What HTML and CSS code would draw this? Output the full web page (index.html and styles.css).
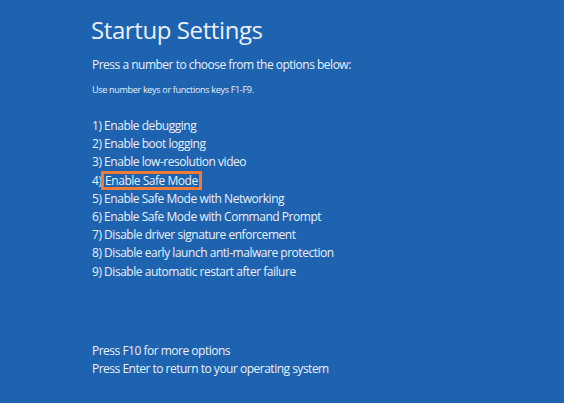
FILE: index.html
```html
<!DOCTYPE html>
<html>
<head>
<meta charset="utf-8">
<link rel="stylesheet" href="styles.css">
</head>
<body>
<main class="screen">
  <h1 class="title">Startup Settings</h1>
  <p class="lead">Press a number to choose from the options below:</p>
  <p class="hint">Use number keys or functions keys F1-F9.</p>
  <ol class="options">
    <li>1) Enable debugging</li>
    <li>2) Enable boot logging</li>
    <li>3) Enable low-resolution video</li>
    <li>4) <span class="highlight">Enable Safe Mode</span></li>
    <li>5) Enable Safe Mode with Networking</li>
    <li>6) Enable Safe Mode with Command Prompt</li>
    <li>7) Disable driver signature enforcement</li>
    <li>8) Disable early launch anti-malware protection</li>
    <li>9) Disable automatic restart after failure</li>
  </ol>
  <div class="footer">
    <p>Press F10 for more options</p>
    <p>Press Enter to return to your operating system</p>
  </div>
</main>
</body>
</html>
```
FILE: styles.css
```css
html, body {
  margin: 0;
  padding: 0;
  background: #1e63b0;
}
body {
  width: 564px;
  height: 403px;
  overflow: hidden;
  font-family: "Open Sans", "Noto Sans", sans-serif;
  color: #eaf0f8;
}
.screen {
  padding: 13px 0 0 91px;
}
.title {
  margin: 0;
  font-weight: 400;
  font-size: 24px;
  letter-spacing: -0.4px;
  line-height: 34px;
}
.lead {
  margin: 9px 0 0 1px;
  font-size: 12px;
  letter-spacing: -0.5px;
  line-height: 18px;
}
.hint {
  margin: 9px 0 0 1px;
  font-size: 9px;
  letter-spacing: -0.3px;
  line-height: 14px;
}
.options {
  list-style: none;
  margin: 20px 0 0 1px;
  padding: 0;
  font-size: 12px;
  letter-spacing: -0.47px;
  line-height: 18.2px;
}
.highlight {
  display: inline-block;
  line-height: 13px;
  outline: 3px solid #f07b35;
  padding: 0 1px;
}
.footer {
  margin: 61px 0 0 1px;
  font-size: 12px;
  letter-spacing: -0.5px;
  line-height: 18px;
}
.footer p {
  margin: 0;
}
```
